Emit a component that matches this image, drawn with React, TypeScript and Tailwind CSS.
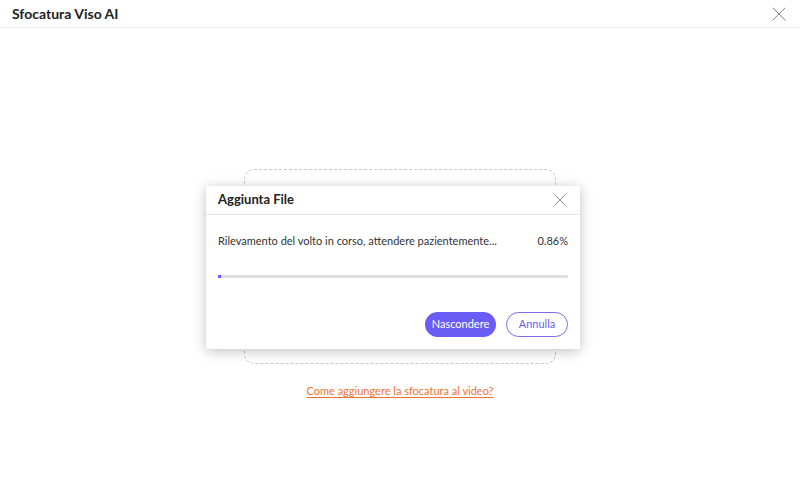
import { X } from "lucide-react";

export default function App() {
  return (
    <div className="relative w-[800px] h-[504px] bg-white overflow-hidden font-['Lato',sans-serif]">
      <header className="h-[28px] flex items-center justify-between pl-3 pr-[9px] border-b border-[#ececec]">
        <h1 className="font-bold text-[14px] text-[#222]">Sfocatura Viso AI</h1>
        <X size={24} strokeWidth={0.8} className="text-[#666]" />
      </header>

      <main className="flex flex-col items-center">
        <div className="mt-[141px] w-[312px] h-[195px] rounded-[10px] border border-dashed border-[#c8c8c8]" />
        <a className="mt-[19px] text-[11px] text-[#f0722f] underline underline-offset-2">
          Come aggiungere la sfocatura al video?
        </a>
      </main>

      <div className="absolute left-[206px] top-[186px] w-[374px] h-[163px] bg-white shadow-[0_2px_12px_rgba(0,0,0,0.25)] flex flex-col">
        <div className="h-[29px] flex items-center justify-between pl-3 pr-[9px] border-b border-[#e6e6e6]">
          <span className="font-bold text-[13px] text-[#222]">Aggiunta File</span>
          <X size={22} strokeWidth={0.8} className="text-[#666]" />
        </div>
        <div className="flex-1 px-3 flex flex-col">
          <div className="mt-[18px] flex justify-between text-[11px] text-[#333]">
            <span>Rilevamento del volto in corso, attendere pazientemente...</span>
            <span>0.86%</span>
          </div>
          <div className="mt-[25px] h-[3px] bg-[#dedede] rounded-full">
            <div className="h-full w-[3px] bg-[#6b5cf6]" />
          </div>
          <div className="mt-auto mb-[12px] flex justify-end gap-[10px] text-[11px]">
            <button className="h-[25px] w-[71px] rounded-full bg-[#6b5cf6] text-white">
              Nascondere
            </button>
            <button className="h-[25px] w-[62px] rounded-full border border-[#7a6cf2] text-[#6b5cf6]">
              Annulla
            </button>
          </div>
        </div>
      </div>
    </div>
  );
}
